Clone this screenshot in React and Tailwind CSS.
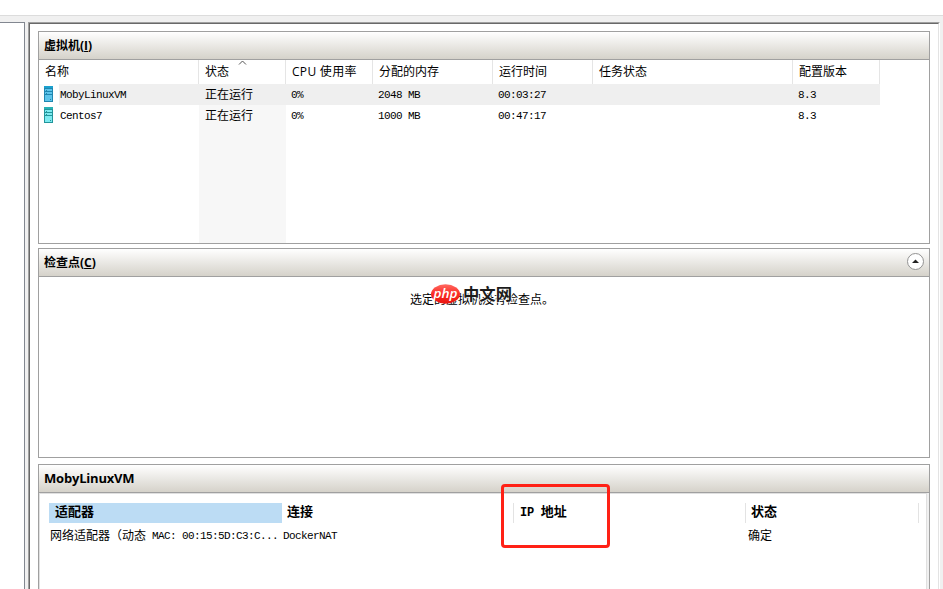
import clsx from 'clsx';

const columns = [
  { key: 'name', label: '名称' },
  { key: 'state', label: '状态', sorted: true },
  { key: 'cpu', label: 'CPU 使用率' },
  { key: 'memory', label: '分配的内存' },
  { key: 'uptime', label: '运行时间' },
  { key: 'task', label: '任务状态' },
  { key: 'version', label: '配置版本' },
];

const machines = [
  { name: 'MobyLinuxVM', state: '正在运行', cpu: '0%', memory: '2048 MB', uptime: '00:03:27', task: '', version: '8.3', selected: true },
  { name: 'Centos7', state: '正在运行', cpu: '0%', memory: '1000 MB', uptime: '00:47:17', task: '', version: '8.3' },
];

const GRID = 'grid grid-cols-[160px_87px_87px_120px_100px_200px_87px]';
const MONO = "font-['Liberation_Mono','Noto_Sans_CJK_SC',monospace] text-[11px] tracking-[-0.6px]";
const CJK = "font-['Noto_Sans_CJK_SC',sans-serif] text-[12px] tracking-normal";

const ServerIcon = ({ selected }) => {
  const body = selected ? '#5cc4ea' : '#7ceaf0';
  const line = selected ? '#1f86b0' : '#22959b';
  return (
    <svg width="9" height="16" viewBox="0 0 9 16" className="shrink-0" shapeRendering="crispEdges">
      <rect width="9" height="16" fill={line} />
      <rect width="9" height="2" fill={selected ? '#1ba1cf' : '#27b1b5'} />
      <rect x="1" y="3" width="7" height="12" fill={body} />
      <rect x="1" y="5" width="7" height="1" fill={line} />
      <rect x="1" y="8" width="7" height="1" fill={line} />
      <rect x="2" y="4" width="1" height="1" fill={line} />
      <rect x="2" y="7" width="1" height="1" fill={line} />
      <rect x="6" y="13" width="1" height="1" fill={line} />
    </svg>
  );
};

const Panel = ({ title, action, className, children }) => (
  <section className={clsx('flex flex-col border border-[#a0a0a0] bg-white', className)}>
    <header className="flex h-7 shrink-0 items-center justify-between border-b border-[#a0a0a0] bg-linear-to-b from-white to-[#d5d2ca] pl-[5px] pr-1">
      <h2 className="font-['Open_Sans','Noto_Sans_CJK_SC',sans-serif] text-[12px] leading-none font-bold">{title}</h2>
      {action}
    </header>
    {children}
  </section>
);

const MachineRow = ({ vm }) => (
  <div className={clsx(GRID, MONO, 'h-[21px] grid-rows-[21px] items-stretch leading-[23px]')}>
    <div className="flex">
      <div className="flex w-5 items-start pl-[5px] pt-0.5"><ServerIcon selected={vm.selected} /></div>
      <div className={clsx('flex-1 pl-px', vm.selected && 'bg-[#efefef]')}>{vm.name}</div>
    </div>
    <div className={clsx(CJK, 'pl-1.5 leading-[19px]', vm.selected ? 'bg-[#efefef]' : 'bg-[#f7f7f7]')}>{vm.state}</div>
    {['cpu', 'memory', 'uptime', 'task', 'version'].map(key => (
      <div key={key} className={clsx('pl-[5px]', vm.selected && 'bg-[#efefef]')}>{vm[key]}</div>
    ))}
  </div>
);

const Watermark = () => (
  <svg width="90" height="30" viewBox="0 -4 90 30" className="absolute left-[391px] top-[2px]">
    <defs>
      <linearGradient id="badge" x1="0" y1="0" x2="0" y2="1">
        <stop offset="0" stopColor="#ff6a61" />
        <stop offset="0.5" stopColor="#fb2b25" />
        <stop offset="1" stopColor="#e9150f" />
      </linearGradient>
    </defs>
    <ellipse cx="15.5" cy="11" rx="14.5" ry="9.7" fill="url(#badge)" />
    <text x="3.5" y="14.5" fill="#fff" textLength="24" lengthAdjust="spacingAndGlyphs" fontSize="13" fontStyle="italic" fontWeight="600" fontFamily="Open Sans, sans-serif">php</text>
    <text x="33" y="17" fill="#1c1c1c" stroke="#fff" strokeWidth="1.2" paintOrder="stroke" textLength="49" lengthAdjust="spacingAndGlyphs" fontSize="16" fontWeight="700" fontFamily="Noto Sans CJK SC, sans-serif">中文网</text>
  </svg>
);

const CollapseButton = () => (
  <button className="-mt-0.5 flex size-[18px] items-center justify-center" aria-label="折叠">
    <svg width="18" height="18" viewBox="0 0 18 18">
      <circle cx="8.5" cy="8.5" r="8" fill="#fff" stroke="#929292" />
      <path d="M5 10 8.5 6.5 12 10z" fill="#222" />
    </svg>
  </button>
);

export default function App() {
  return (
    <div className="flex h-[589px] w-[943px] flex-col overflow-hidden bg-[#f0f0f0] font-['Liberation_Sans','Noto_Sans_CJK_SC',sans-serif] text-[12px] text-black">
      <div className="h-4 shrink-0 border-b border-[#dcdcdc] bg-white" />
      <div className="flex flex-1 pt-1.5">
        {/* console tree */}
        <div className="w-[25px] border-t border-r border-[#828790] bg-white" />
        <div className="ml-[3px] flex w-[912px] border-t border-l border-[#a0a0a0] border-r border-r-white">
          <div className="w-full border-t border-l border-[#696969] border-r border-r-[#e3e3e3] bg-white pl-2 pt-[7px]">
            <Panel title={<>虚拟机(<span className="underline underline-offset-1">I</span>)</>} className="h-[213px] w-[892px]">
              <div className={clsx(GRID, "h-6 shrink-0 font-['Open_Sans','Noto_Sans_CJK_SC',sans-serif] leading-6")}>
                {columns.map(col => (
                  <div key={col.key} className="relative border-r border-[#e5e5e5] pl-1.5">
                    {col.key === 'cpu' ? <span className="tracking-[0.3px]">{col.label}</span> : col.label}
                    {col.sorted && (
                      <svg width="9" height="5" viewBox="0 0 9 5" className="absolute left-[39px] top-0">
                        <path d="M1 4.5 4.5 1 8 4.5" fill="none" stroke="#555" />
                      </svg>
                    )}
                  </div>
                ))}
              </div>
              {machines.map(vm => <MachineRow key={vm.name} vm={vm} />)}
              <div className="ml-40 w-[87px] flex-1 bg-[#f7f7f7]" />
            </Panel>

            <Panel title={<>检查点(<span className="underline underline-offset-1">C</span>)</>} action={<CollapseButton />} className="mt-1 h-[210px] w-[892px]">
              <div className="relative flex-1 pl-[371px] pt-3.5">
                <p className="leading-[18px]">选定的虚拟机没有检查点。</p>
                <Watermark />
              </div>
            </Panel>

            <Panel title={<span className="text-[13px] tracking-[-0.2px]">MobyLinuxVM</span>} className="mt-1.5 h-[140px] w-[892px]">
              <div className="relative flex-1 bg-[#f0f0f0] pr-0.5">
                <div className="h-full border-t border-l border-r border-[#e0e0e0] bg-white pl-[9px] pt-[9px]">
                  <div className="grid h-5 w-[870px] grid-cols-[233px_232px_232px_173px] grid-rows-[20px] text-[13px] leading-[18px] font-bold">
                    <div className="bg-[#bcdcf4] pl-1.5">适配器</div>
                    <div className="border-r border-[#e3e3e3] pl-[5px]">连接</div>
                    <div className="border-r border-[#e3e3e3] pl-1.5">
                      <span className="font-['Liberation_Mono',monospace] text-[12px] tracking-[-0.3px]">IP </span>地址
                    </div>
                    <div className="border-r border-[#e3e3e3] pl-[5px]">状态</div>
                  </div>
                  <div className={clsx(MONO, 'grid h-6 w-[870px] grid-cols-[233px_232px_232px_173px] leading-[26px] whitespace-pre')}>
                    <div className="flex pl-px">
                      <span className={clsx(CJK, 'leading-[23px]')}>网络适配器（动态</span>
                      <span> MAC: 00:15:5D:C3:C...</span>
                    </div>
                    <div className="pl-px">DockerNAT</div>
                    <div />
                    <div className={clsx(CJK, 'pl-0.5 leading-[23px]')}>确定</div>
                  </div>
                </div>
                {/* highlighted IP column */}
                <div className="absolute left-[462px] top-[-9px] h-16 w-[109px] rounded-[4px] border-[3px] border-[#ff2116]" />
              </div>
            </Panel>
          </div>
        </div>
      </div>
    </div>
  );
}
